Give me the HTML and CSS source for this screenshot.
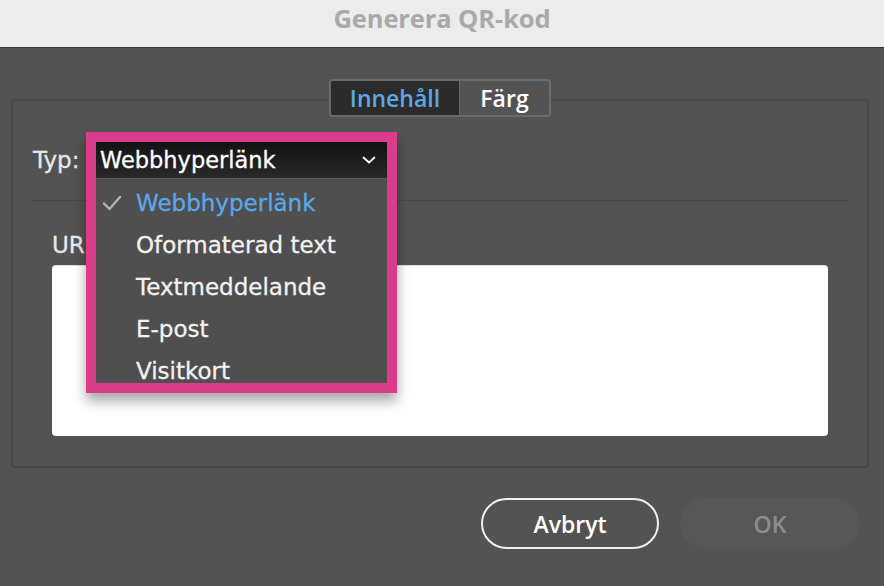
FILE: index.html
```html
<!DOCTYPE html>
<html lang="sv">
<head>
<meta charset="utf-8">
<title>Generera QR-kod</title>
<link rel="stylesheet" href="styles.css">
</head>
<body>
<div class="titlebar">Generera QR-kod</div>
<div class="main">
  <div class="panel">
    <div class="tabs">
      <div class="tab tab-active">Innehåll</div>
      <div class="tab tab-second">Färg</div>
    </div>
    <div class="typ-row">
      <span class="typ-label">Typ:</span>
      <div class="select">
        <div class="select-head">
          <span>Webbhyperlänk</span>
          <svg class="chevron" width="14" height="8" viewBox="0 0 14 8"><path d="M1.5 1.5 L7 6.5 L12.5 1.5" fill="none" stroke="#ffffff" stroke-width="1.7" stroke-linecap="round" stroke-linejoin="round"/></svg>
        </div>
        <ul class="menu">
          <li class="item item-selected"><span class="check"><svg width="20" height="16" viewBox="0 0 20 16"><path d="M2 8.5 L7.5 14 L18 2" fill="none" stroke="#b4b4b4" stroke-width="2.4" stroke-linecap="round" stroke-linejoin="round"/></svg></span>Webbhyperlänk</li>
          <li class="item"><span class="check"></span>Oformaterad text</li>
          <li class="item"><span class="check"></span>Textmeddelande</li>
          <li class="item"><span class="check"></span>E-post</li>
          <li class="item"><span class="check"></span>Visitkort</li>
        </ul>
        <div class="highlight"></div>
      </div>
    </div>
    <div class="separator"></div>
    <div class="url-label">URL</div>
    <div class="url-box"></div>
  </div>
  <div class="buttons">
    <button class="btn btn-cancel">Avbryt</button>
    <button class="btn btn-ok">OK</button>
  </div>
</div>
</body>
</html>
```

FILE: styles.css
```css
* { box-sizing: border-box; }

html, body {
  margin: 0;
  padding: 0;
}

body {
  width: 884px;
  height: 586px;
  overflow: hidden;
  background: #535353;
  font-family: "DejaVu Sans", "Noto Sans", sans-serif;
}

.titlebar {
  height: 48px;
  background: #ececec;
  border-bottom: 1px solid #363636;
  text-align: center;
  font-family: "Open Sans", "Liberation Sans", sans-serif;
  font-weight: 700;
  font-size: 25.5px;
  line-height: 36px;
  color: #a9a9a9;
  letter-spacing: -0.1px;
}

.main {
  display: flex;
  flex-direction: column;
}

.panel {
  margin: 51px 15px 0 11px;
  border: 2px solid #484848;
  border-radius: 4px;
  display: flex;
  flex-direction: column;
  padding-bottom: 30px;
}

.tabs {
  align-self: center;
  margin-top: -22px;
  display: flex;
  border: 2px solid #6a6a6a;
  border-radius: 4px;
  overflow: hidden;
  background: #535353;
  font-family: "Open Sans", "Liberation Sans", sans-serif;
  font-weight: 600;
  font-size: 23px;
  line-height: 34px;
}

.tab {
  height: 34px;
  text-align: center;
  color: #ffffff;
}

.tab-active {
  width: 129px;
  background: #2b2b2b;
  color: #5ba8e8;
  border-right: 1px solid #6a6a6a;
}

.tab-second {
  width: 89px;
}

.typ-row {
  display: flex;
  align-items: center;
  margin-top: 25px;
  padding-left: 20px;
  height: 36px;
}

.typ-label {
  width: 63px;
  font-size: 23px;
  color: #e8e8e8;
  -webkit-text-stroke: 0.3px #e8e8e8;
}

.select {
  position: relative;
  width: 291px;
  height: 36px;
}

.select-head {
  height: 36px;
  display: flex;
  align-items: center;
  justify-content: space-between;
  padding: 0 11px 0 4px;
  background: linear-gradient(#121212, #2a2a2a);
  color: #ffffff;
  font-size: 22.5px;
  -webkit-text-stroke: 0.3px #ffffff;
}

.chevron {
  display: block;
}

.menu {
  position: absolute;
  left: 0;
  top: 36px;
  width: 291px;
  height: 205px;
  margin: 0;
  padding: 3px 0 0;
  list-style: none;
  background: #4f4f4f;
  border-top: 1px solid #5a5a5a;
  overflow: hidden;
}

.item {
  display: flex;
  align-items: center;
  height: 42px;
  font-size: 23px;
  color: #f2f2f2;
  -webkit-text-stroke: 0.3px #f2f2f2;
}

.item-selected {
  color: #5aa8e9;
  -webkit-text-stroke: 0.3px #5aa8e9;
}

.check {
  width: 40px;
  display: flex;
  align-items: center;
  padding-left: 6px;
}

.check svg {
  display: block;
}

.highlight {
  position: absolute;
  left: -10px;
  top: -10px;
  width: 311px;
  height: 261px;
  border: 10px solid #da3c8a;
  box-shadow: 0 8px 12px rgba(0, 0, 0, 0.35);
  pointer-events: none;
}

.separator {
  height: 1px;
  margin: 22px 19px 0;
  background: #474747;
}

.url-label {
  margin-top: 31px;
  padding-left: 39px;
  font-size: 23px;
  line-height: 26px;
  color: #e8e8e8;
  -webkit-text-stroke: 0.3px #e8e8e8;
}

.url-box {
  margin: 7px 39px 0 39px;
  height: 171px;
  background: #ffffff;
  border-radius: 4px;
  border-top: 1px solid #dcdcdc;
}

.buttons {
  display: flex;
  justify-content: flex-end;
  gap: 21px;
  margin-top: 30px;
  padding-right: 24px;
}

.btn {
  height: 51px;
  border-radius: 26px;
  font-family: "Open Sans", "Liberation Sans", sans-serif;
  font-weight: 600;
  font-size: 23px;
  padding: 0;
}

.btn-cancel {
  width: 178px;
  background: transparent;
  border: 2px solid #f0f0f0;
  color: #ffffff;
}

.btn-ok {
  width: 180px;
  background: #575757;
  border: none;
  color: #8c8c8c;
}
```
